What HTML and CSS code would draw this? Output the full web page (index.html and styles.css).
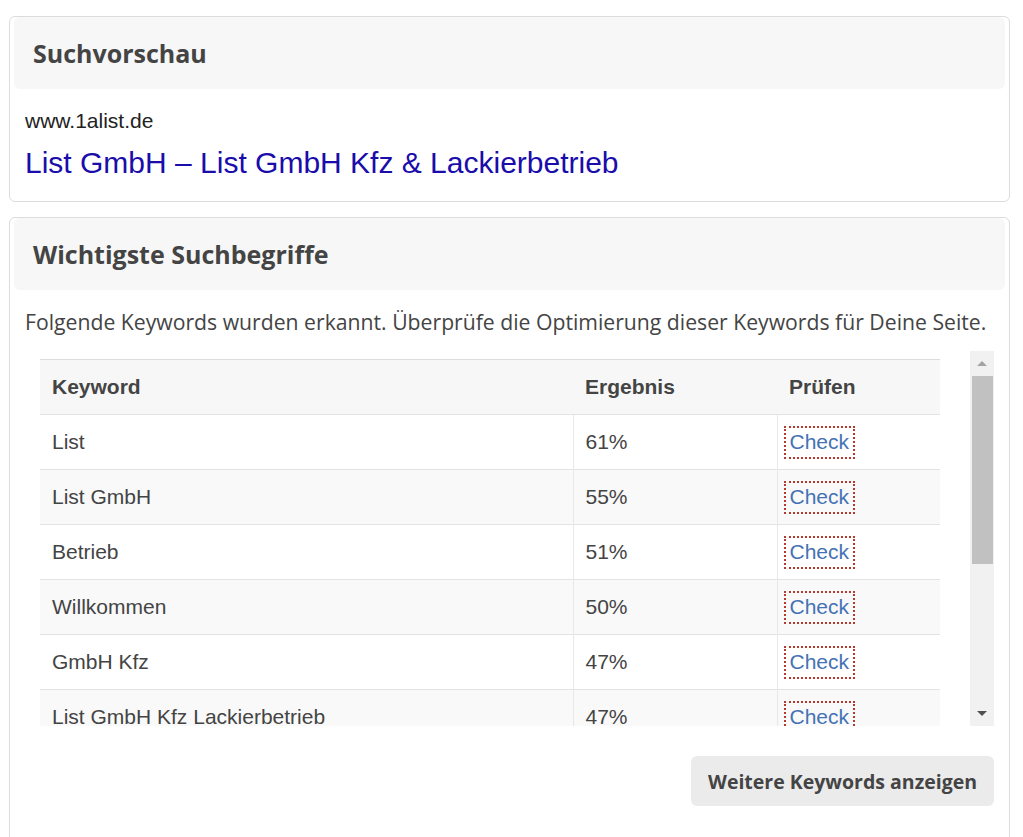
FILE: index.html
```html
<!DOCTYPE html>
<html lang="de">

<head>
    <meta charset="UTF-8">
    <meta name="viewport" content="width=device-width, initial-scale=1.0">
    <title>SEO Check</title>
    <link rel="stylesheet" href="styles.css">
</head>

<body>
    <div class="panel">
        <div class="panel-head">
            <h3>Suchvorschau</h3>
        </div>
        <div class="panel-body preview">
            <div class="preview-url">www.1alist.de</div>
            <a class="preview-title" href="#">List GmbH – List GmbH Kfz &amp; Lackierbetrieb</a>
        </div>
    </div>

    <div class="panel">
        <div class="panel-head">
            <h3>Wichtigste Suchbegriffe</h3>
        </div>
        <div class="panel-body">
            <p class="intro">Folgende Keywords wurden erkannt. Überprüfe die Optimierung dieser Keywords für Deine Seite.</p>

            <div class="scroll-box">
                <div class="table-wrap">
                    <table class="keyword-table">
                        <thead>
                            <tr>
                                <th class="col-keyword">Keyword</th>
                                <th class="col-result">Ergebnis</th>
                                <th class="col-check">Prüfen</th>
                            </tr>
                        </thead>
                        <tbody>
                            <tr>
                                <td>List</td>
                                <td>61%</td>
                                <td><a class="check-link" href="#">Check</a></td>
                            </tr>
                            <tr>
                                <td>List GmbH</td>
                                <td>55%</td>
                                <td><a class="check-link" href="#">Check</a></td>
                            </tr>
                            <tr>
                                <td>Betrieb</td>
                                <td>51%</td>
                                <td><a class="check-link" href="#">Check</a></td>
                            </tr>
                            <tr>
                                <td>Willkommen</td>
                                <td>50%</td>
                                <td><a class="check-link" href="#">Check</a></td>
                            </tr>
                            <tr>
                                <td>GmbH Kfz</td>
                                <td>47%</td>
                                <td><a class="check-link" href="#">Check</a></td>
                            </tr>
                            <tr>
                                <td>List GmbH Kfz Lackierbetrieb</td>
                                <td>47%</td>
                                <td><a class="check-link" href="#">Check</a></td>
                            </tr>
                        </tbody>
                    </table>
                </div>
                <div class="scrollbar">
                    <div class="scroll-btn up"></div>
                    <div class="scroll-track">
                        <div class="scroll-thumb"></div>
                    </div>
                    <div class="scroll-btn down"></div>
                </div>
            </div>

            <div class="actions">
                <button class="more-button">Weitere Keywords anzeigen</button>
            </div>
        </div>
    </div>
</body>

</html>
```

FILE: styles.css
```css
body {
    margin: 0;
    padding: 16px 13px 0 9px;
    background-color: #ffffff;
    font-family: "Open Sans", sans-serif;
    color: #444;
    overflow: hidden;
}

.panel {
    border: 1px solid #dcdcdc;
    border-radius: 6px;
    margin-bottom: 15px;
    background-color: #fff;
}

.panel-head {
    margin: 0 4px;
    background-color: #f7f7f7;
    border-radius: 6px;
    padding: 21px 19px;
}

.panel-head h3 {
    margin: 0;
    font-size: 25px;
    line-height: 30px;
    font-weight: 700;
    color: #444;
}

.panel-body {
    padding: 0 15px 0 15px;
}

/* Suchvorschau */

.preview {
    padding-top: 20px;
    padding-bottom: 21px;
    font-family: "Liberation Sans", Arial, sans-serif;
}

.preview-url {
    font-size: 21px;
    line-height: 24px;
    color: #222;
}

.preview-title {
    display: block;
    margin-top: 13px;
    font-size: 30px;
    line-height: 34px;
    color: #1a0dab;
    text-decoration: none;
}

/* Suchbegriffe */

.intro {
    margin: 19px 0 16px;
    font-size: 21.2px;
    line-height: 26px;
    color: #444;
}

.scroll-box {
    display: flex;
    height: 375px;
}

.table-wrap {
    flex: 1;
    overflow: hidden;
    padding: 8px 30px 0 15px;
}

.keyword-table {
    width: 100%;
    border-collapse: collapse;
    font-family: "Liberation Sans", Arial, sans-serif;
    font-size: 21px;
    color: #444;
}

.keyword-table th,
.keyword-table td {
    height: 54px;
    padding: 0 12px;
    text-align: left;
    border-top: 1px solid #e3e3e3;
}

.keyword-table th {
    background-color: #f7f7f7;
    font-weight: 700;
    border-top-color: #dcdcdc;
}

.keyword-table td + td {
    border-left: 1px solid #e8e8e8;
}

.keyword-table tbody tr:nth-child(even) td {
    background-color: #f9f9f9;
}

.col-keyword {
    width: 509px;
}

.col-result {
    width: 180px;
}

.check-link {
    display: inline-block;
    margin-left: -6px;
    padding: 4px 6px 5px 6px;
    line-height: 24px;
    color: #4472b5;
    text-decoration: none;
    outline: 2px dotted #b5392c;
    outline-offset: -2px;
}

/* fake scrollbar */

.scrollbar {
    width: 24px;
    display: flex;
    flex-direction: column;
    background-color: #f1f1f1;
}

.scroll-btn {
    height: 25px;
    display: flex;
    align-items: center;
    justify-content: center;
}

.scroll-btn.up::before,
.scroll-btn.down::before {
    content: "";
    width: 0;
    height: 0;
    border-left: 5px solid transparent;
    border-right: 5px solid transparent;
}

.scroll-btn.up::before {
    border-bottom: 5px solid #a3a3a3;
}

.scroll-btn.down::before {
    border-top: 5px solid #505050;
}

.scroll-track {
    flex: 1;
    padding: 0 1px 0 2px;
}

.scroll-thumb {
    height: 188px;
    background-color: #c1c1c1;
}

.actions {
    display: flex;
    justify-content: flex-end;
    padding: 30px 0 60px;
}

.more-button {
    height: 50px;
    padding: 0 17px;
    border: none;
    border-radius: 6px;
    background-color: #ebebeb;
    font-family: "Open Sans", sans-serif;
    font-size: 19.5px;
    font-weight: 700;
    color: #444;
    cursor: pointer;
}
```
